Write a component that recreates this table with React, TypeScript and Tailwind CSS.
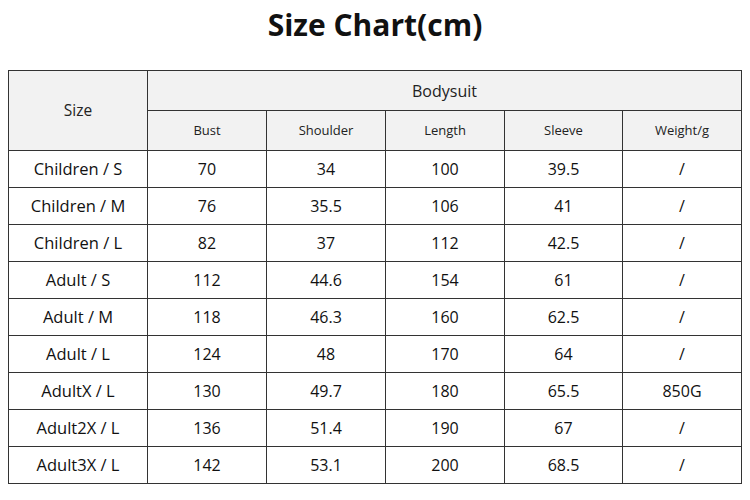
import React from "react";

const rows: string[][] = [
  ["Children / S", "70", "34", "100", "39.5", "/"],
  ["Children / M", "76", "35.5", "106", "41", "/"],
  ["Children / L", "82", "37", "112", "42.5", "/"],
  ["Adult / S", "112", "44.6", "154", "61", "/"],
  ["Adult / M", "118", "46.3", "160", "62.5", "/"],
  ["Adult / L", "124", "48", "170", "64", "/"],
  ["AdultX / L", "130", "49.7", "180", "65.5", "850G"],
  ["Adult2X / L", "136", "51.4", "190", "67", "/"],
  ["Adult3X / L", "142", "53.1", "200", "68.5", "/"],
];

export default function App() {
  return (
    <div className="w-[750px] h-[500px] bg-white text-[#111]" style={{ fontFamily: '"Open Sans", "Noto Sans", sans-serif' }}>
      <div className="h-[70px] flex justify-center pt-[3px]">
        <h1 className="text-[30px] font-bold leading-[44px] text-[#111]">Size Chart(cm)</h1>
      </div>
      <table className="ml-[8px] w-[733px] table-fixed border-collapse border-[1.5px] border-[#555]">
        <colgroup>
          <col className="w-[139px]" />
          <col className="w-[119px]" />
          <col className="w-[119px]" />
          <col className="w-[119px]" />
          <col className="w-[118px]" />
          <col className="w-[119px]" />
        </colgroup>
        <thead>
          <tr className="h-[40px] bg-[#f2f2f2]">
            <th rowSpan={2} className="border border-[#333] font-normal text-[15.5px] text-[#222]">Size</th>
            <th colSpan={5} className="border border-[#333] font-normal text-[16px] text-[#222]">Bodysuit</th>
          </tr>
          <tr className="h-[40px] bg-[#f2f2f2]">
            {["Bust", "Shoulder", "Length", "Sleeve", "Weight/g"].map((h) => (
              <th key={h} className="border border-[#333] font-normal text-[13px] text-[#222]">{h}</th>
            ))}
          </tr>
        </thead>
        <tbody>
          {rows.map((r) => (
            <tr key={r[0]} className="h-[37px]">
              {r.map((c, i) => (
                <td key={i} className={`border border-[#333] text-center p-0 ${i === 0 ? "text-[16.5px]" : "text-[16px]"}`}>{c}</td>
              ))}
            </tr>
          ))}
        </tbody>
      </table>
    </div>
  );
}
